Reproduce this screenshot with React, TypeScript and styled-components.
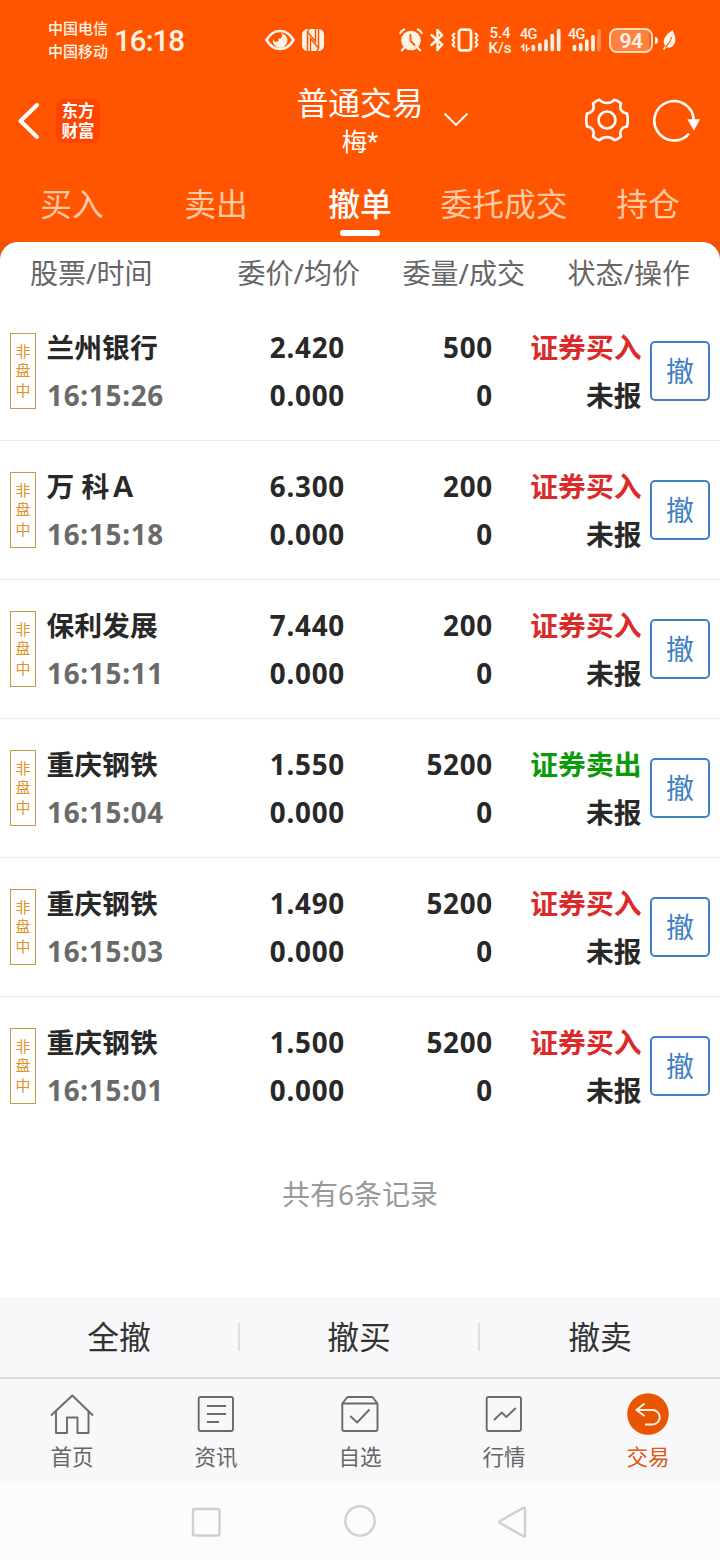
import React from "react";
import styled, { createGlobalStyle } from "styled-components";

const Global = createGlobalStyle`
  * { box-sizing: border-box; }
  body {
    margin: 0;
    background: #fff;
    font-family: "Noto Sans", "Noto Sans CJK SC", sans-serif;
  }
`;

const Screen = styled.div`
  width: 720px;
  height: 1560px;
  display: flex;
  flex-direction: column;
  overflow: hidden;
  background: #fff;
`;

const Top = styled.header`
  height: 242px;
  flex: none;
  background: #ff5500;
  color: #fff;
`;

const StatusBar = styled.div`
  height: 80px;
  display: flex;
  align-items: center;
  padding-left: 48px;
  color: #fff3e6;
  font-family: Roboto, "Noto Sans CJK SC", sans-serif;
`;

const Item = styled.div<{ $ml?: number }>`
  flex: none;
  display: flex;
  margin-left: ${(p) => p.$ml ?? 0}px;
`;

const Carriers = styled.div`
  width: 60px;
  padding-top: 2px;
  font-size: 15px;
  line-height: 23px;
  font-weight: 500;
  white-space: nowrap;
`;

const Clock = styled.div`
  width: 72px;
  margin-left: 6px;
  padding-top: 2px;
  font-size: 29.5px;
  line-height: 40px;
  font-weight: 500;
  letter-spacing: -0.95px;
`;

const Speed = styled.div`
  width: 24px;
  margin-left: 9px;
  padding-top: 2px;
  font-size: 15px;
  line-height: 15px;
  font-weight: 500;
  text-align: center;
  white-space: nowrap;
`;

const Signal = styled.div<{ $w: number; $ml: number }>`
  width: ${(p) => p.$w}px;
  height: 26px;
  margin-left: ${(p) => p.$ml}px;
  position: relative;
`;

const NetType = styled.span`
  position: absolute;
  left: 0;
  top: 0;
  font-size: 14.5px;
  line-height: 16px;
  font-weight: 500;
  letter-spacing: -0.8px;
`;

const Battery = styled.div`
  width: 44px;
  height: 25px;
  margin-left: 7px;
  border: 2px solid #ffd9b8;
  border-radius: 8px;
  background: linear-gradient(90deg, #ff8140 0 38px, #f0621c 38px);
  font-size: 21px;
  line-height: 22px;
  font-weight: 600;
  text-align: center;
  letter-spacing: -0.6px;
`;

const BatteryTip = styled.div`
  width: 3px;
  height: 7px;
  margin-left: 2px;
  border-radius: 0 3px 3px 0;
  background: #ffe9d4;
`;

const TitleBar = styled.div`
  height: 90px;
  display: grid;
  grid-template-columns: 290px 140px 1fr;
  align-items: start;
`;

const TitleLeft = styled.div`
  display: flex;
  padding: 19px 0 0 17px;
`;

const Logo = styled.div`
  width: 44px;
  height: 44px;
  margin-left: 16px;
  padding-top: 3px;
  border-radius: 8px;
  background: #ff4400;
  font-family: Roboto, "Noto Sans CJK SC", sans-serif;
  font-size: 16.5px;
  line-height: 19.5px;
  font-weight: 700;
  text-align: center;
`;

const TitleText = styled.div`
  text-align: center;
  white-space: nowrap;
`;

const Title = styled.div`
  font-size: 31.8px;
  line-height: 40px;
  padding-top: 3px;
`;

const Account = styled.div`
  font-family: Roboto, "Noto Sans CJK SC", sans-serif;
  font-size: 25.5px;
  line-height: 38px;
`;

const TitleRight = styled.div`
  display: flex;
  padding: 18px 0 0 13px;
`;

const Tabs = styled.nav`
  height: 72px;
  display: grid;
  grid-template-columns: repeat(5, 1fr);
`;

const Tab = styled.div<{ $active?: boolean }>`
  display: flex;
  flex-direction: column;
  align-items: center;
  padding-top: 14px;
  font-size: 31.8px;
  line-height: 40px;
  white-space: nowrap;
  color: ${(p) => (p.$active ? "#fff" : "#ffc9a6")};
  font-weight: ${(p) => (p.$active ? 500 : 400)};
  &::after {
    content: "";
    width: 40px;
    height: 6px;
    margin-top: 6px;
    border-radius: 3px;
    background: ${(p) => (p.$active ? "#fff" : "transparent")};
  }
`;

const PanelBack = styled.div`
  flex: none;
  background: linear-gradient(#e85504 0 20px, #fff 20px);
`;

const Panel = styled.main`
  height: 1055px;
  border-radius: 18px 18px 0 0;
  background: #fff;
`;

const HeadRow = styled.div`
  height: 60px;
  display: grid;
  grid-template-columns: 160px 170px 165px 165px;
  padding: 11px 0 0 30px;
  font-size: 28px;
  line-height: 40px;
  color: #666;
  white-space: nowrap;
`;

const HeadCell = styled.div<{ $right?: boolean }>`
  text-align: ${(p) => (p.$right ? "right" : "left")};
`;

const Row = styled.div<{ $last?: boolean }>`
  height: 139px;
  display: grid;
  grid-template-columns: 26px 160px 148px 148px 149px 69px;
  align-items: start;
  padding: 21px 10px 0;
  border-bottom: 1px solid ${(p) => (p.$last ? "transparent" : "#ebebeb")};
`;

const Badge = styled.div`
  width: 26px;
  height: 76px;
  margin-top: 10px;
  padding-top: 8px;
  border: 1px solid #c99a45;
  color: #e0922a;
  font-size: 15px;
  line-height: 19.3px;
  text-align: center;
`;

const Pair = styled.div<{ $right?: boolean }>`
  padding-left: ${(p) => (p.$right ? 0 : 11)}px;
  text-align: ${(p) => (p.$right ? "right" : "left")};
  font-size: 27.8px;
  line-height: 48px;
  font-weight: 700;
  white-space: nowrap;
  color: #282828;
`;

const Name = styled.div`
  margin-left: -0.5px;
`;

const State = styled.div`
  margin-right: -0.5px;
`;

const Digits = styled.div<{ $muted?: boolean }>`
  letter-spacing: 0.75px;
  margin-right: -1px;
  color: ${(p) => (p.$muted ? "#6a6a6a" : "inherit")};
`;

const Side = styled(State)<{ $sell?: boolean }>`
  color: ${(p) => (p.$sell ? "#0a9a0a" : "#dc2a2a")};
`;

const CancelButton = styled.button`
  width: 60px;
  height: 60px;
  justify-self: end;
  margin-top: 18px;
  padding: 0;
  border: 2px solid #3f80c6;
  border-radius: 5px;
  background: #fff;
  color: #3f80c6;
  font: 400 28px/56px "Noto Sans", "Noto Sans CJK SC", sans-serif;
`;

const Summary = styled.div`
  padding-top: 38px;
  font-size: 28px;
  line-height: 40px;
  text-align: center;
  color: #999;
`;

const Actions = styled.div`
  height: 82px;
  flex: none;
  display: grid;
  grid-template-columns: repeat(3, 1fr);
  align-items: center;
  background: #f8f8fa;
  border-bottom: 2px solid #dcdcde;
`;

const Action = styled.div`
  height: 28px;
  font-size: 31.8px;
  line-height: 27px;
  text-align: center;
  color: #333;
  border-right: 2px solid #dedee0;
  &:last-child {
    border-right: 0;
  }
`;

const BottomNav = styled.nav`
  height: 104px;
  flex: none;
  display: grid;
  grid-template-columns: repeat(5, 1fr);
  background: #f8f8fa;
`;

const NavItem = styled.div<{ $active?: boolean }>`
  display: flex;
  flex-direction: column;
  align-items: center;
  padding-top: 13px;
  font-size: 21.5px;
  line-height: 30px;
  color: ${(p) => (p.$active ? "#d95a10" : "#666")};
  svg {
    margin-bottom: 6px;
  }
`;

const SystemNav = styled.div`
  height: 77px;
  flex: none;
  display: flex;
  justify-content: center;
  gap: 110px;
  padding-top: 17px;
  background: #fcfcfc;
`;

const tabs = ["买入", "卖出", "撤单", "委托成交", "持仓"];

const orders = [
  { name: "兰州银行", time: "16:15:26", price: "2.420", qty: "500", sell: false },
  { name: "万 科Ａ", time: "16:15:18", price: "6.300", qty: "200", sell: false },
  { name: "保利发展", time: "16:15:11", price: "7.440", qty: "200", sell: false },
  { name: "重庆钢铁", time: "16:15:04", price: "1.550", qty: "5200", sell: true },
  { name: "重庆钢铁", time: "16:15:03", price: "1.490", qty: "5200", sell: false },
  { name: "重庆钢铁", time: "16:15:01", price: "1.500", qty: "5200", sell: false },
];

const EyeIcon = () => (
  <svg width="30" height="22" viewBox="0 0 30 22">
    <path d="M1.500 11C5 5 9.500 2 15 2s10 3 13.500 9C25 17 20.500 20 15 20S5 17 1.500 11z" fill="none" stroke="currentColor" strokeWidth="2.600" />
    <path d="M16 4.200a7.300 7.300 0 1 1-8 5.500c.8 2.600 2.600 3.600 4.300 3 1.400-.5 1.700-1.900.9-3.200 2 .4 3.700-.6 3.900-2.300.1-1.200-.3-2.200-1.100-3z" fill="currentColor" />
  </svg>
);

const NfcIcon = () => (
  <svg width="22" height="22" viewBox="0 0 22 22">
    <rect width="22" height="22" rx="5.500" fill="currentColor" />
    <g fill="none" stroke="#ff5500">
      <path d="M5.500 22V3L7 0M16.500 0v19L15 22" strokeWidth="1.500" />
      <path d="M8.500 22V9.500l7.500 9M13.500 0v12.500L6 3.500" strokeWidth="1.400" />
    </g>
  </svg>
);

const AlarmIcon = () => (
  <svg width="24" height="24" viewBox="0 0 24 24" fill="none" stroke="currentColor" strokeWidth="2.200" strokeLinecap="round">
    <circle cx="12" cy="12.500" r="9.800" fill="currentColor" stroke="none" />
    <path d="M1.300 5.200C2 3.500 3.200 2.200 5 1.500M22.700 5.200C22 3.500 20.800 2.200 19 1.500M5 20l-2 2.300M19 20l2 2.300" />
    <path d="M11.500 7v6l4 4" stroke="#ff5500" strokeWidth="1.800" />
  </svg>
);

const BluetoothIcon = () => (
  <svg width="14" height="24" viewBox="0 0 14 24" fill="none" stroke="currentColor" strokeWidth="2.500" strokeLinejoin="round" strokeLinecap="round">
    <path d="M1.500 7l10.500 9.500L7.500 22V15M7.500 9V2L12 7.300 1.500 17" />
  </svg>
);

const VibrateIcon = () => (
  <svg width="28" height="24" viewBox="0 0 28 24" fill="none" stroke="currentColor" strokeLinecap="round" strokeLinejoin="round">
    <rect x="8" y="1.700" width="12" height="20.600" rx="2.500" strokeWidth="2.800" />
    <path d="M3.500 5.500L1.500 7.500l2 2.300-2 2.300 2 2.300-2 2.300 2 2M24.500 5.500l2 2-2 2.300 2 2.300-2 2.300 2 2.300-2 2" strokeWidth="2" />
  </svg>
);

const BarsA = () => (
  <svg width="42" height="26" viewBox="0 0 42 26">
    <path d="M13.300 19.500v3M19.800 17.500v5M26 14v8.500M32.300 8.500v14M38.700 3.700v18.800" stroke="currentColor" strokeWidth="3.700" strokeLinecap="round" />
    <path d="M3.500 24v-6l-2.500 2.500M6.500 17.500v6l3-2.500" fill="none" stroke="currentColor" strokeWidth="1.600" />
  </svg>
);

const BarsB = () => (
  <svg width="34" height="26" viewBox="0 0 34 26" stroke="currentColor" strokeWidth="3.700" strokeLinecap="round">
    <path d="M6.500 19.500v3M12.600 17.500v5M18.800 14v8.500M25 9.500v13" />
    <path d="M31 3.700v18.800" opacity=".35" />
  </svg>
);

const LeafIcon = () => (
  <svg width="14" height="22" viewBox="0 0 14 22">
    <path d="M10.500 1c2.800 5.500 4 10.500 1.500 14.500-1.800 3-5 4-7.500 2.800L2.300 21 1 20l2-3C-.5 11.500 3.500 6 10.500 1z" fill="currentColor" />
    <path d="M9.500 8c-.8 4-2.800 7-6 10" stroke="#ff5500" strokeWidth="1.100" fill="none" />
  </svg>
);

const BackIcon = () => (
  <svg width="23" height="44" viewBox="0 0 23 44">
    <path d="M20 6L3.500 22 20 38" fill="none" stroke="#fff" strokeWidth="4" strokeLinecap="round" strokeLinejoin="round" />
  </svg>
);

const ChevronIcon = () => (
  <svg width="26" height="44" viewBox="0 0 26 44">
    <path d="M1.500 15.500L13 27l11.500-11.500" fill="none" stroke="#fff" strokeWidth="1.800" />
  </svg>
);

const GearIcon = () => (
  <svg width="44" height="44" viewBox="-22 -22 44 44" fill="none" stroke="#fff" strokeWidth="2.600" strokeLinejoin="round">
    <circle r="8.500" />
    <path d="M-7.500 -20.300Q-10 -19.800 -14 -16.500C-12 -11.500 -14.500 -7 -20 -6.500Q-21.500 0 -20 6.500C-14.500 7 -12 11.500 -14 16.500Q-10 19.800 -7.500 20.300C-4 16 4 16 7.500 20.300Q10 19.800 14 16.500C12 11.500 14.500 7 20 6.500Q21.500 0 20 -6.500C14.500 -7 12 -11.500 14 -16.500Q10 -19.800 7.500 -20.300C4 -16 -4 -16 -7.500 -20.300Z" />
  </svg>
);

const RefreshIcon = () => (
  <svg width="48" height="46" viewBox="0 0 48 46">
    <path d="M37 35.600A19.700 19.700 0 1 1 41.700 21.800" fill="none" stroke="#fff" strokeWidth="2.600" />
    <path d="M35.300 21.300h12.800L41.900 32.500z" fill="#fff" />
  </svg>
);

const lineIcon = { width: 44, height: 44, viewBox: "0 0 44 44", fill: "none", stroke: "#6a6a6a", strokeWidth: 1.9 };

const HomeIcon = () => (
  <svg {...lineIcon}>
    <path d="M1 23.500L22.300 3.500 43 23.500M6 19.500V41h11V25.500h10.500V41h11V19.500" strokeLinejoin="round" />
  </svg>
);

const NewsIcon = () => (
  <svg {...lineIcon}>
    <rect x="4.700" y="5" width="34.300" height="34" rx="2" />
    <path d="M13 14h19M13 22h19M13 30h12" />
  </svg>
);

const WatchIcon = () => (
  <svg {...lineIcon}>
    <path d="M4.300 11.500L9.500 5h25l5 6.500V37a2 2 0 0 1-2 2H6.300a2 2 0 0 1-2-2zM4.300 11.500h35.200" strokeLinejoin="round" />
    <path d="M12.200 24l7 6.500L31.500 17.500" />
  </svg>
);

const MarketIcon = () => (
  <svg {...lineIcon}>
    <rect x="4.700" y="5" width="34.300" height="34" rx="2" />
    <path d="M12 28l7.800-7.500 4.500 4.500 9.500-9" />
  </svg>
);

const TradeIcon = () => (
  <svg width="44" height="44" viewBox="0 0 44 44" fill="none">
    <circle cx="22" cy="22" r="20.800" fill="#e85604" />
    <path d="M18.500 11.500L10.500 18l8 6M11 18h15.500a7 7 0 0 1 0 14.500H19" stroke="#fff0e0" strokeWidth="2" />
  </svg>
);

const navItems = [
  { label: "首页", Icon: HomeIcon },
  { label: "资讯", Icon: NewsIcon },
  { label: "自选", Icon: WatchIcon },
  { label: "行情", Icon: MarketIcon },
  { label: "交易", Icon: TradeIcon },
];

const sysIcon = { width: 42, height: 42, viewBox: "0 0 42 42", fill: "none", stroke: "#cfcfcf", strokeWidth: 2.4 };

export default function App() {
  return (
    <>
      <Global />
      <Screen>
        <Top>
          <StatusBar>
            <Carriers>
              <div>中国电信</div>
              <div>中国移动</div>
            </Carriers>
            <Clock>16:18</Clock>
            <Item $ml={79}><EyeIcon /></Item>
            <Item $ml={7}><NfcIcon /></Item>
            <Item $ml={75}><AlarmIcon /></Item>
            <Item $ml={7}><BluetoothIcon /></Item>
            <Item $ml={7}><VibrateIcon /></Item>
            <Speed>
              <div>5.4</div>
              <div>K/s</div>
            </Speed>
            <Signal $w={42} $ml={8}>
              <NetType>4G</NetType>
              <BarsA />
            </Signal>
            <Signal $w={34} $ml={6}>
              <NetType>4G</NetType>
              <BarsB />
            </Signal>
            <Battery>94</Battery>
            <BatteryTip />
            <Item $ml={4}><LeafIcon /></Item>
          </StatusBar>
          <TitleBar>
            <TitleLeft>
              <BackIcon />
              <Logo>
                <div>东方</div>
                <div>财富</div>
              </Logo>
            </TitleLeft>
            <TitleText>
              <Title>普通交易</Title>
              <Account>梅*</Account>
            </TitleText>
            <TitleRight>
              <ChevronIcon />
              <Item $ml={116}><GearIcon /></Item>
              <Item $ml={23}><RefreshIcon /></Item>
            </TitleRight>
          </TitleBar>
          <Tabs>
            {tabs.map((t) => (
              <Tab key={t} $active={t === "撤单"}>{t}</Tab>
            ))}
          </Tabs>
        </Top>
        <PanelBack>
          <Panel>
            <HeadRow>
              <HeadCell>股票/时间</HeadCell>
              <HeadCell $right>委价/均价</HeadCell>
              <HeadCell $right>委量/成交</HeadCell>
              <HeadCell $right>状态/操作</HeadCell>
            </HeadRow>
            {orders.map((o, i) => (
              <Row key={o.time} $last={i === orders.length - 1}>
                <Badge>
                  <div>非</div>
                  <div>盘</div>
                  <div>中</div>
                </Badge>
                <Pair>
                  <Name>{o.name}</Name>
                  <Digits $muted>{o.time}</Digits>
                </Pair>
                <Pair $right>
                  <Digits>{o.price}</Digits>
                  <Digits>0.000</Digits>
                </Pair>
                <Pair $right>
                  <Digits>{o.qty}</Digits>
                  <Digits>0</Digits>
                </Pair>
                <Pair $right>
                  <Side $sell={o.sell}>{o.sell ? "证券卖出" : "证券买入"}</Side>
                  <State>未报</State>
                </Pair>
                <CancelButton>撤</CancelButton>
              </Row>
            ))}
            <Summary>共有6条记录</Summary>
          </Panel>
        </PanelBack>
        <Actions>
          <Action>全撤</Action>
          <Action>撤买</Action>
          <Action>撤卖</Action>
        </Actions>
        <BottomNav>
          {navItems.map(({ label, Icon }) => (
            <NavItem key={label} $active={label === "交易"}>
              <Icon />
              {label}
            </NavItem>
          ))}
        </BottomNav>
        <SystemNav>
          <svg {...sysIcon}>
            <rect x="6" y="9" width="26.500" height="26.500" rx="1.500" />
          </svg>
          <svg {...sysIcon}>
            <circle cx="21" cy="21" r="14.700" />
          </svg>
          <svg {...sysIcon}>
            <path d="M34 8.500v27a1 1 0 0 1-1.500.8L9 23a1.200 1.200 0 0 1 0-2L32.500 7.700A1 1 0 0 1 34 8.500z" />
          </svg>
        </SystemNav>
      </Screen>
    </>
  );
}
